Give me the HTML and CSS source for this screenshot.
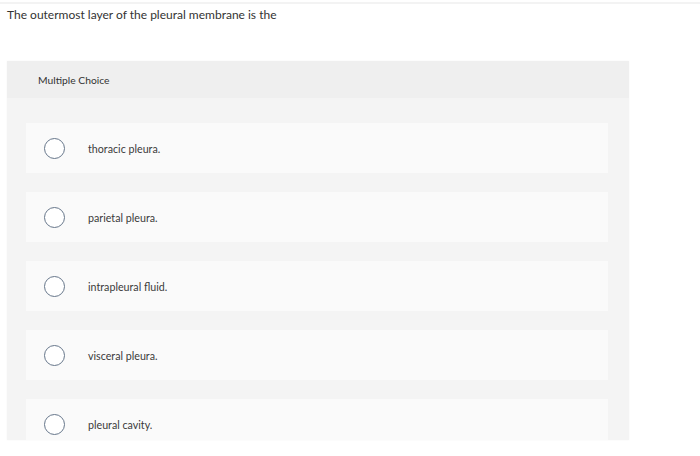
FILE: index.html
```html
<!DOCTYPE html>
<html>
<head>
<meta charset="utf-8">
<link rel="stylesheet" href="styles.css">
</head>
<body>
<div class="topline"></div>
<p class="question">The outermost layer of the pleural membrane is the</p>
<div class="panel">
  <div class="panel-head">Multiple Choice</div>
  <div class="panel-body">
    <div class="option"><span class="radio"></span><span class="label">thoracic pleura.</span></div>
    <div class="option"><span class="radio"></span><span class="label">parietal pleura.</span></div>
    <div class="option"><span class="radio"></span><span class="label">intrapleural fluid.</span></div>
    <div class="option"><span class="radio"></span><span class="label">visceral pleura.</span></div>
    <div class="option"><span class="radio"></span><span class="label">pleural cavity.</span></div>
  </div>
</div>
</body>
</html>
```
FILE: styles.css
```css
html, body {
  margin: 0;
  padding: 0;
  background: #ffffff;
}
body {
  font-family: Lato, "Open Sans", Arial, sans-serif;
  color: #333333;
  width: 700px;
  height: 456px;
  overflow: hidden;
}
.topline {
  height: 2px;
  margin-top: 2px;
  background: #f3f3f3;
}
.question {
  margin: 0;
  padding: 3px 0 0 7px;
  font-size: 12px;
  line-height: 16px;
  color: #333333;
}
.panel {
  margin: 38px 0 0 7px;
  width: 622px;
  height: 379px;
  overflow: hidden;
  background: #f4f4f4;
  box-shadow: 0 0 2px rgba(0,0,0,0.04);
}
.panel-head {
  height: 37px;
  background: #efefef;
  display: flex;
  align-items: center;
  padding-left: 31px;
  font-size: 10.3px;
  color: #333333;
}
.panel-body {
  display: flex;
  flex-direction: column;
  gap: 19px;
  padding: 25px 21px 0 19px;
}
.option {
  flex: none;
  height: 50px;
  background: #fafafa;
  display: flex;
  align-items: center;
  padding-left: 18px;
}
.radio {
  width: 19px;
  height: 19px;
  border: 1.5px solid #66768a;
  border-radius: 50%;
  background: #ffffff;
  flex: none;
}
.label {
  margin-left: 23px;
  font-size: 10.7px;
  color: #3a3a3a;
}
```
